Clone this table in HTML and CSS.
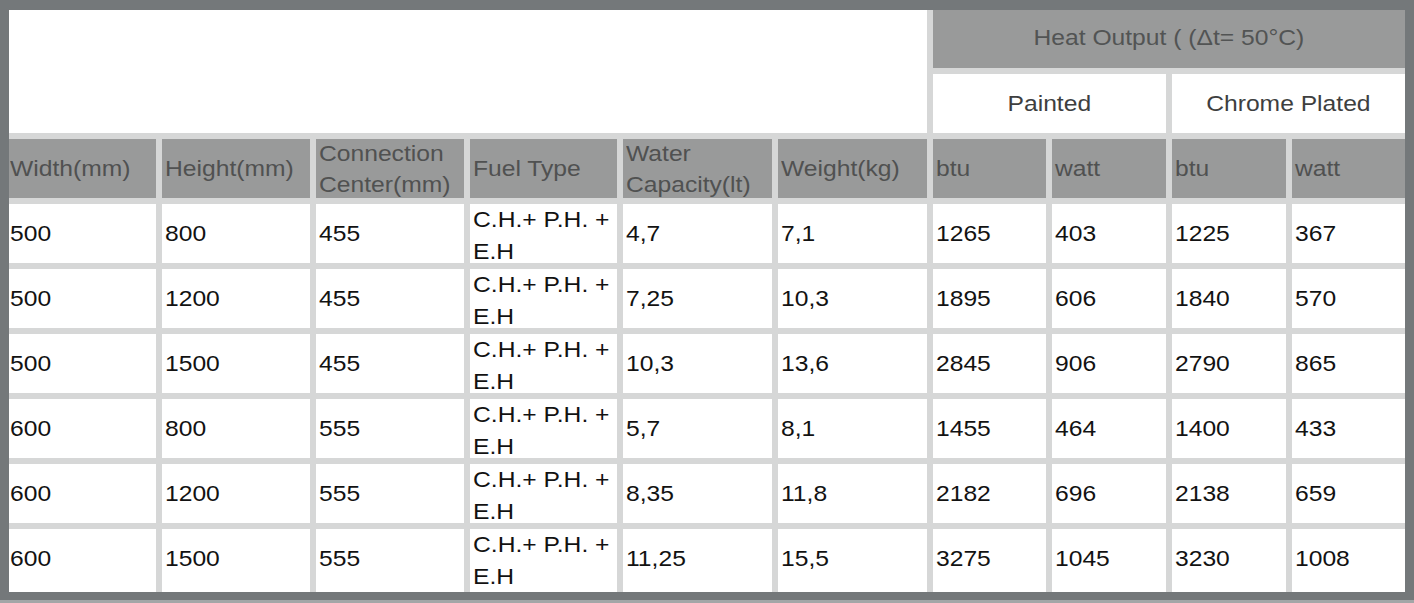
FILE: index.html
```html
<!DOCTYPE html>
<html lang="en">
<head>
<meta charset="utf-8">
<title>Heat Output Table</title>
<link rel="stylesheet" href="styles.css">
</head>
<body>
<div class="spec">
  <div class="cell blank"></div>
  <div class="cell group-head span4"><span class="c">Heat Output ( (Δt= 50°C)</span></div>
  <div class="cell sub-head span2"><span class="c">Painted</span></div>
  <div class="cell sub-head span2"><span class="c">Chrome Plated</span></div>

  <div class="cell head first"><span class="t">Width(mm)</span></div>
  <div class="cell head"><span class="t">Height(mm)</span></div>
  <div class="cell head"><span class="t">Connection Center(mm)</span></div>
  <div class="cell head"><span class="t">Fuel Type</span></div>
  <div class="cell head"><span class="t">Water Capacity(lt)</span></div>
  <div class="cell head"><span class="t">Weight(kg)</span></div>
  <div class="cell head"><span class="t">btu</span></div>
  <div class="cell head"><span class="t">watt</span></div>
  <div class="cell head"><span class="t">btu</span></div>
  <div class="cell head"><span class="t">watt</span></div>

  <div class="cell first"><span class="t">500</span></div>
  <div class="cell"><span class="t">800</span></div>
  <div class="cell"><span class="t">455</span></div>
  <div class="cell fuel"><span class="t">C.H.+ P.H. + E.H</span></div>
  <div class="cell"><span class="t">4,7</span></div>
  <div class="cell"><span class="t">7,1</span></div>
  <div class="cell"><span class="t">1265</span></div>
  <div class="cell"><span class="t">403</span></div>
  <div class="cell"><span class="t">1225</span></div>
  <div class="cell"><span class="t">367</span></div>

  <div class="cell first"><span class="t">500</span></div>
  <div class="cell"><span class="t">1200</span></div>
  <div class="cell"><span class="t">455</span></div>
  <div class="cell fuel"><span class="t">C.H.+ P.H. + E.H</span></div>
  <div class="cell"><span class="t">7,25</span></div>
  <div class="cell"><span class="t">10,3</span></div>
  <div class="cell"><span class="t">1895</span></div>
  <div class="cell"><span class="t">606</span></div>
  <div class="cell"><span class="t">1840</span></div>
  <div class="cell"><span class="t">570</span></div>

  <div class="cell first"><span class="t">500</span></div>
  <div class="cell"><span class="t">1500</span></div>
  <div class="cell"><span class="t">455</span></div>
  <div class="cell fuel"><span class="t">C.H.+ P.H. + E.H</span></div>
  <div class="cell"><span class="t">10,3</span></div>
  <div class="cell"><span class="t">13,6</span></div>
  <div class="cell"><span class="t">2845</span></div>
  <div class="cell"><span class="t">906</span></div>
  <div class="cell"><span class="t">2790</span></div>
  <div class="cell"><span class="t">865</span></div>

  <div class="cell first"><span class="t">600</span></div>
  <div class="cell"><span class="t">800</span></div>
  <div class="cell"><span class="t">555</span></div>
  <div class="cell fuel"><span class="t">C.H.+ P.H. + E.H</span></div>
  <div class="cell"><span class="t">5,7</span></div>
  <div class="cell"><span class="t">8,1</span></div>
  <div class="cell"><span class="t">1455</span></div>
  <div class="cell"><span class="t">464</span></div>
  <div class="cell"><span class="t">1400</span></div>
  <div class="cell"><span class="t">433</span></div>

  <div class="cell first"><span class="t">600</span></div>
  <div class="cell"><span class="t">1200</span></div>
  <div class="cell"><span class="t">555</span></div>
  <div class="cell fuel"><span class="t">C.H.+ P.H. + E.H</span></div>
  <div class="cell"><span class="t">8,35</span></div>
  <div class="cell"><span class="t">11,8</span></div>
  <div class="cell"><span class="t">2182</span></div>
  <div class="cell"><span class="t">696</span></div>
  <div class="cell"><span class="t">2138</span></div>
  <div class="cell"><span class="t">659</span></div>

  <div class="cell first last"><span class="t">600</span></div>
  <div class="cell last"><span class="t">1500</span></div>
  <div class="cell last"><span class="t">555</span></div>
  <div class="cell fuel last"><span class="t">C.H.+ P.H. + E.H</span></div>
  <div class="cell last"><span class="t">11,25</span></div>
  <div class="cell last"><span class="t">15,5</span></div>
  <div class="cell last"><span class="t">3275</span></div>
  <div class="cell last"><span class="t">1045</span></div>
  <div class="cell last"><span class="t">3230</span></div>
  <div class="cell last"><span class="t">1008</span></div>
</div>
</body>
</html>
```

FILE: styles.css
```css
html, body {
  margin: 0;
  padding: 0;
}

body {
  width: 1414px;
  height: 603px;
  box-sizing: border-box;
  padding: 10px 9px 0 9px;
  overflow: hidden;
  background: linear-gradient(to bottom, #74787a 0, #74787a 600px, #a3a6a7 600px, #a3a6a7 603px);
  font-family: "Liberation Sans", Arial, sans-serif;
  font-size: 22px;
  color: #121212;
}

.spec {
  display: grid;
  grid-template-columns: 147px 148px 148px 147px 149px 149px 113px 114px 114px 113px;
  grid-template-rows: 58px 59px 59px 59px 59px 59px 59px 59px 63px;
  gap: 6px;
  background: #d6d7d7;
  width: 1396px;
}

.cell {
  background: #ffffff;
  display: flex;
  align-items: center;
  padding-left: 3px;
  min-width: 0;
  line-height: 31.5px;
  box-sizing: border-box;
}

.cell.first {
  padding-left: 1px;
}

.cell.fuel {
  padding-top: 4px;
}

.cell.last {
  padding-bottom: 4px;
}

.blank {
  grid-column: 1 / 7;
  grid-row: 1 / 3;
}

.span4 {
  grid-column: span 4;
}

.span2 {
  grid-column: span 2;
}

.group-head,
.sub-head {
  justify-content: center;
  padding-left: 0;
}

.group-head {
  background: #999a9a;
  color: #525454;
  padding-bottom: 3px;
}

.sub-head {
  color: #3e3f3f;
}

.head {
  background: #999a9a;
  color: #505151;
  padding-top: 1px;
}

.t {
  display: block;
  width: calc(100% / 1.12);
  transform: scaleX(1.12);
  transform-origin: left center;
  white-space: normal;
}

.c {
  display: inline-block;
  transform: scaleX(1.12);
  transform-origin: center center;
  white-space: nowrap;
}
```
